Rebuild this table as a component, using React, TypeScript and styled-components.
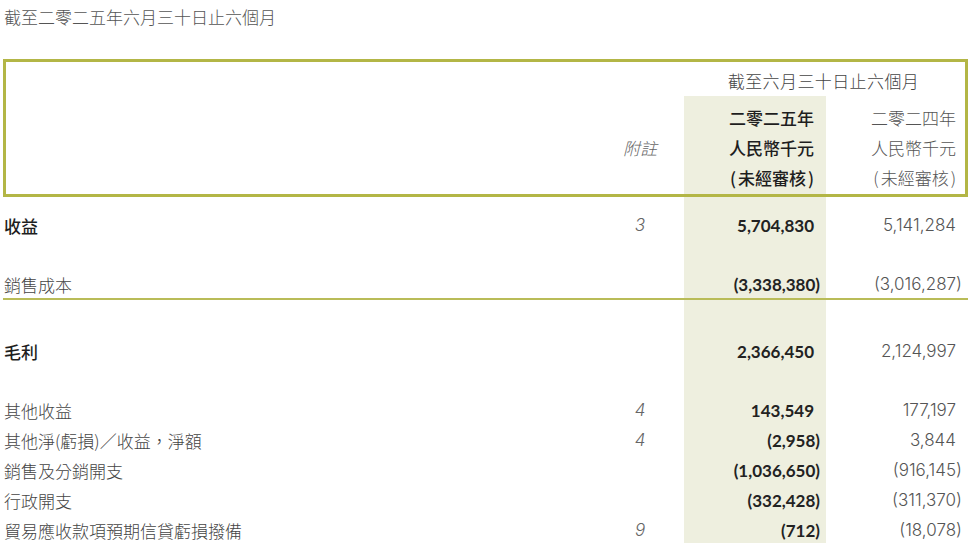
import styled, { createGlobalStyle } from "styled-components"

const GlobalStyle = createGlobalStyle`
    body {
        margin: 0;
        background: #ffffff;
        font-family: "Noto Sans CJK TC", "Noto Sans", sans-serif;
    }
`

const OLIVE = "#b3b646"
const SHADE = "#eeefdf"
const CJK = `"Noto Sans CJK TC", sans-serif`
const NUM = `Lato, "Noto Sans", "Noto Sans CJK TC", sans-serif`
const LIGHT_NUM = `Inter, Lato, "Noto Sans", sans-serif`

const Page = styled.div`
    width: 973px;
    height: 543px;
    overflow: hidden;
    padding: 0 5px 0 3px;
    box-sizing: border-box;
`

const Title = styled.div`
    font-family: ${CJK};
    font-size: 17px;
    font-weight: 300;
    line-height: 30px;
    color: #555555;
    padding: 2px 0 0 1px;
    margin-bottom: 27px;
`

const HeaderBox = styled.div`
    border: 3px solid ${OLIVE};
`

const PeriodRow = styled.div`
    display: flex;
    justify-content: flex-end;
    height: 34px;
`

const PeriodText = styled.div`
    width: 283px;
    padding-top: 4px;
    text-align: center;
    font-family: ${CJK};
    font-size: 17px;
    font-weight: 300;
    letter-spacing: 0.4px;
    line-height: 30px;
    color: #444444;
`

const Columns = styled.div`
    display: flex;
`

const Col = styled.div<{ $w?: number; $hl?: boolean; $pad?: number }>`
    flex: ${({ $w }) => ($w ? `0 0 ${$w}px` : "1 1 auto")};
    background: ${({ $hl }) => ($hl ? SHADE : "transparent")};
    display: flex;
    flex-direction: column;
    padding-top: ${({ $pad = 0 }) => $pad}px;
`

const Cell = styled.div<{
    $top?: number
    $rule?: boolean
    $align?: "left" | "center" | "right"
    $right?: number
}>`
    box-sizing: border-box;
    height: 30px;
    margin-top: ${({ $top = 0 }) => $top}px;
    border-bottom: ${({ $rule }) => ($rule ? `2px solid #b9bc58` : "none")};
    display: flex;
    align-items: center;
    justify-content: ${({ $align = "left" }) =>
        $align === "right" ? "flex-end" : $align === "center" ? "center" : "flex-start"};
    padding-right: ${({ $right = 0 }) => $right}px;
    padding-left: ${({ $align }) => ($align ? 0 : 1)}px;
    white-space: nowrap;
`

const Label = styled.span<{ $bold?: boolean }>`
    font-family: ${CJK};
    font-size: 17px;
    font-weight: ${({ $bold }) => ($bold ? 500 : 300)};
    color: ${({ $bold }) => ($bold ? "#1e1e1e" : "#444444")};
`

const Note = styled.span`
    font-family: ${LIGHT_NUM};
    font-size: 17px;
    font-weight: 300;
    font-style: italic;
    color: #666666;
`

const NoteHead = styled(Note)`
    font-family: ${CJK};
`

const HeadText = styled.span<{ $bold?: boolean }>`
    font-family: ${CJK};
    font-size: 17px;
    font-weight: ${({ $bold }) => ($bold ? 500 : 300)};
    color: ${({ $bold }) => ($bold ? "#1e1e1e" : "#555555")};
`

const Paren = styled.span`
    margin: 0 2px;
`

const Amount = styled.span<{ $bold?: boolean; $neg?: boolean }>`
    font-family: ${({ $bold }) => ($bold ? NUM : LIGHT_NUM)};
    font-size: 17px;
    font-weight: ${({ $bold }) => ($bold ? 700 : 300)};
    color: ${({ $bold }) => ($bold ? "#222222" : "#555555")};
    margin-right: ${({ $neg }) => ($neg ? -6 : 0)}px;
`

type Row = {
    label: string
    bold?: boolean
    note?: string
    cur: string
    prev: string
    top?: number
    rule?: boolean
}

const rows: Row[] = [
    { label: "收益", bold: true, note: "3", cur: "5,704,830", prev: "5,141,284", top: 13 },
    { label: "銷售成本", cur: "(3,338,380)", prev: "(3,016,287)", top: 30, rule: true },
    { label: "毛利", bold: true, cur: "2,366,450", prev: "2,124,997", top: 36 },
    { label: "其他收益", note: "4", cur: "143,549", prev: "177,197", top: 29 },
    { label: "其他淨(虧損)／收益，淨額", note: "4", cur: "(2,958)", prev: "3,844" },
    { label: "銷售及分銷開支", cur: "(1,036,650)", prev: "(916,145)" },
    { label: "行政開支", cur: "(332,428)", prev: "(311,370)" },
    { label: "貿易應收款項預期信貸虧損撥備", note: "9", cur: "(712)", prev: "(18,078)" },
]

const isNeg = (v: string) => v.startsWith("(")

function Unaudited({ bold }: { bold?: boolean }) {
    return (
        <HeadText $bold={bold}>
            <Paren>(</Paren>未經審核<Paren>)</Paren>
        </HeadText>
    )
}

export default function App() {
    return (
        <Page>
            <GlobalStyle />
            <Title>截至二零二五年六月三十日止六個月</Title>

            <HeaderBox>
                <PeriodRow>
                    <PeriodText>截至六月三十日止六個月</PeriodText>
                </PeriodRow>
                <Columns>
                    <Col />
                    <Col $w={84} $pad={6}>
                        <Cell />
                        <Cell $align="center" $right={4}>
                            <NoteHead>附註</NoteHead>
                        </Cell>
                        <Cell />
                    </Col>
                    <Col $w={142} $hl $pad={6}>
                        <Cell $align="right" $right={12}><HeadText $bold>二零二五年</HeadText></Cell>
                        <Cell $align="right" $right={12}><HeadText $bold>人民幣千元</HeadText></Cell>
                        <Cell $align="right" $right={10}><Unaudited bold /></Cell>
                        <Cell style={{ height: 2 }} />
                    </Col>
                    <Col $w={139} $pad={6}>
                        <Cell $align="right" $right={9}><HeadText>二零二四年</HeadText></Cell>
                        <Cell $align="right" $right={9}><HeadText>人民幣千元</HeadText></Cell>
                        <Cell $align="right" $right={7}><Unaudited /></Cell>
                    </Col>
                </Columns>
            </HeaderBox>

            <Columns>
                <Col>
                    {rows.map((r) => (
                        <Cell key={r.label} $top={r.top} $rule={r.rule}>
                            <Label $bold={r.bold}>{r.label}</Label>
                        </Cell>
                    ))}
                </Col>
                <Col $w={84}>
                    {rows.map((r) => (
                        <Cell key={r.label} $top={r.top} $rule={r.rule} $align="center" $right={4}>
                            {r.note && <Note>{r.note}</Note>}
                        </Cell>
                    ))}
                </Col>
                <Col $w={142} $hl>
                    {rows.map((r) => (
                        <Cell key={r.label} $top={r.top} $rule={r.rule} $align="right" $right={12}>
                            <Amount $bold $neg={isNeg(r.cur)}>{r.cur}</Amount>
                        </Cell>
                    ))}
                </Col>
                <Col $w={142}>
                    {rows.map((r) => (
                        <Cell key={r.label} $top={r.top} $rule={r.rule} $align="right" $right={12}>
                            <Amount $neg={isNeg(r.prev)}>{r.prev}</Amount>
                        </Cell>
                    ))}
                </Col>
            </Columns>
        </Page>
    )
}
